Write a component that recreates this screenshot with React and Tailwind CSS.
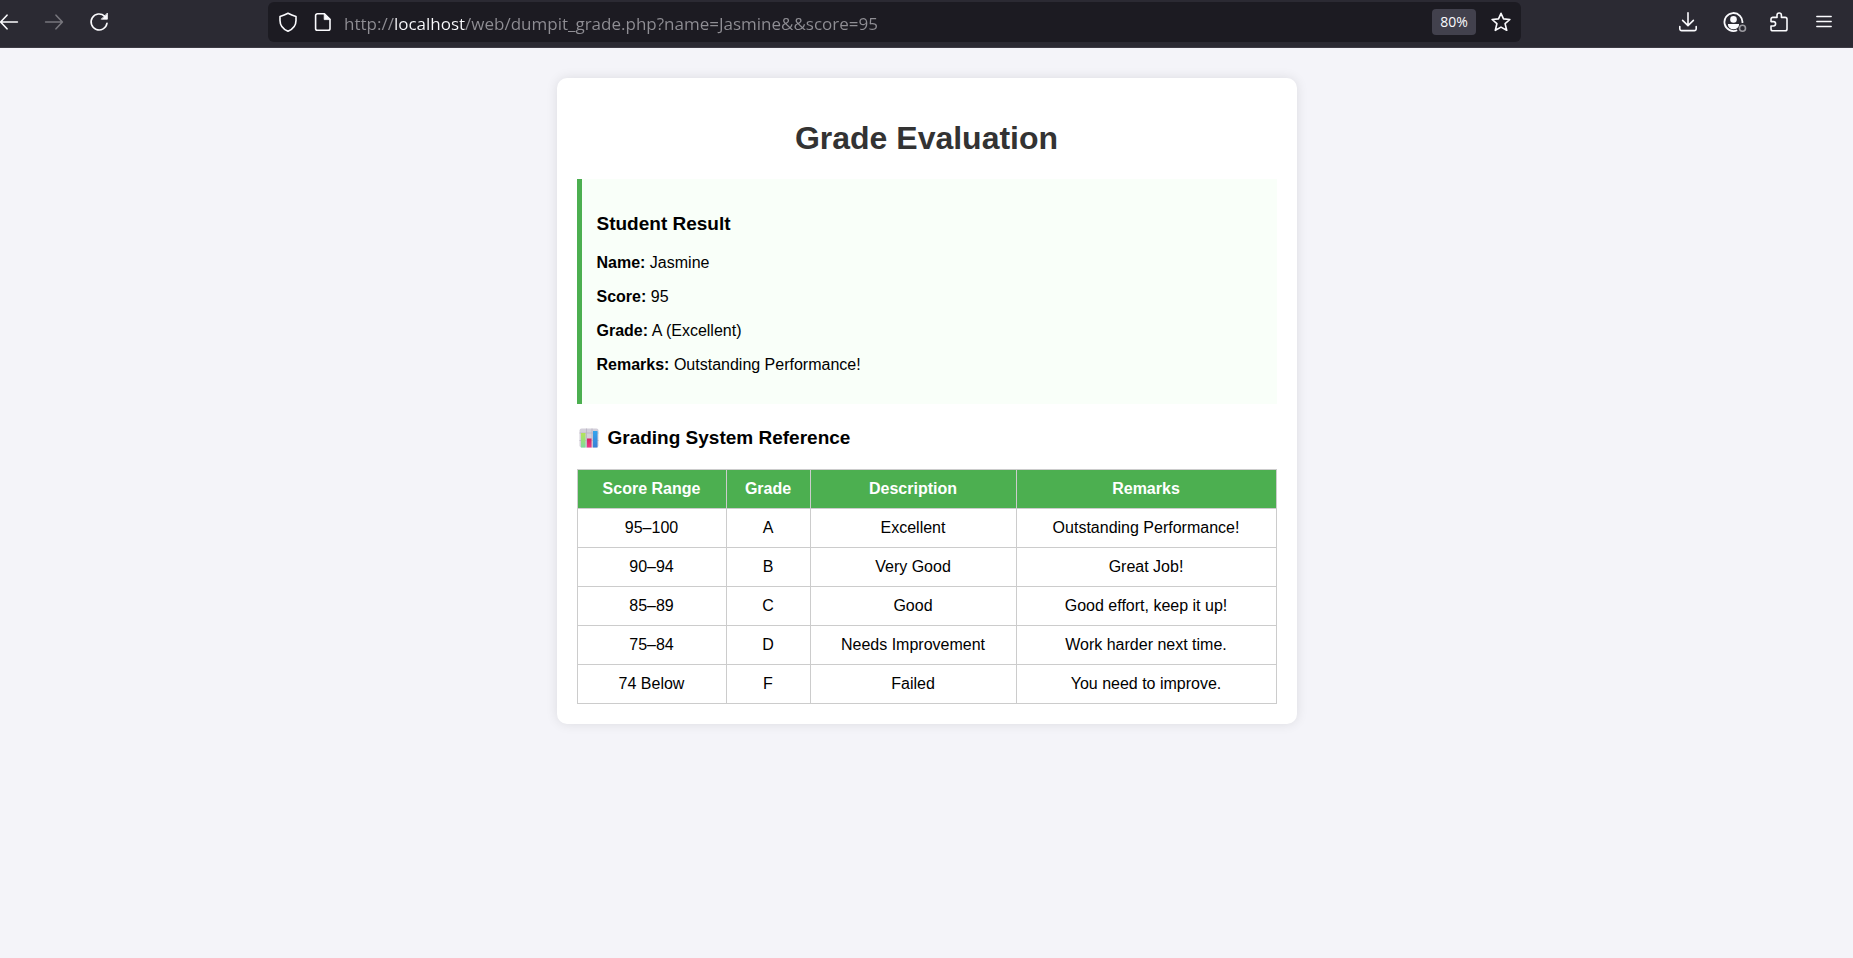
const grades = [
  ["95–100", "A", "Excellent", "Outstanding Performance!"],
  ["90–94", "B", "Very Good", "Great Job!"],
  ["85–89", "C", "Good", "Good effort, keep it up!"],
  ["75–84", "D", "Needs Improvement", "Work harder next time."],
  ["74 Below", "F", "Failed", "You need to improve."],
];

const result = [
  ["Name:", "Jasmine"],
  ["Score:", "95"],
  ["Grade:", "A (Excellent)"],
  ["Remarks:", "Outstanding Performance!"],
];

function Icon({ children, className = "size-5" }) {
  return (
    <svg
      viewBox="0 0 20 20"
      className={`${className} block shrink-0`}
      fill="none"
      stroke="currentColor"
      strokeWidth="1.6"
      strokeLinecap="round"
      strokeLinejoin="round"
      aria-hidden="true"
    >
      {children}
    </svg>
  );
}

function BarButton({ label, className = "", disabled = false, children }) {
  return (
    <button type="button" aria-label={label} disabled={disabled} className={`shrink-0 ${className}`}>
      {children}
    </button>
  );
}

function Toolbar() {
  return (
    <header className="flex items-center border-b border-[#3d3b45] bg-[#2b2a33] pt-0.5 pb-[5px] text-[#fbfbfe]">
      <nav aria-label="Navigation" className="flex w-[268px] shrink-0 items-center gap-[25px]">
        <BarButton label="Back" className="-ml-px">
          <Icon>
            <path d="M8 3.2 1.6 10 8 16.8M1.8 10H18.4" />
          </Icon>
        </BarButton>
        <BarButton label="Forward" disabled className="text-[#77767d]">
          <Icon>
            <path d="M12 3.2 18.4 10 12 16.8M18.2 10H1.6" />
          </Icon>
        </BarButton>
        <BarButton label="Reload">
          <Icon>
            <path d="M18 11.2A8 8 0 1 1 15.6 4.2" />
            <path d="M18.4 1.4V7.2H12.6Z" fill="currentColor" strokeWidth="0.8" />
          </Icon>
        </BarButton>
      </nav>

      <div className="flex h-10 min-w-0 flex-1 items-center rounded-md bg-[#1c1b22] pr-2.5 pl-2.5">
        <BarButton label="Site protection">
          <Icon>
            <path d="M10 1.2C12.6 2.6 15.2 3.6 18 4.4V8.4C18 13 15 17 10 19.2C5 17 2 13 2 8.4V4.4C4.8 3.6 7.4 2.6 10 1.2Z" />
          </Icon>
        </BarButton>
        <BarButton label="Site information" className="ml-[15px]">
          <Icon>
            <path d="M4.4 1.8H11.4L17 7.4V16.4A1.8 1.8 0 0 1 15.2 18.2H4.4A1.8 1.8 0 0 1 2.6 16.4V3.6A1.8 1.8 0 0 1 4.4 1.8Z" />
            <path d="M11.2 2V7.6H16.8Z" fill="currentColor" strokeWidth="0.8" />
          </Icon>
        </BarButton>
        <input
          type="text"
          aria-label="Address"
          defaultValue="http://localhost/web/dumpit_grade.php?name=Jasmine&&score=95"
          className="ml-[11px] h-10 min-w-0 flex-1 bg-linear-[90deg,#8f8e94_50px,#fbfbfe_50px,#fbfbfe_121px,#8f8e94_121px] bg-clip-text pt-0.5 font-['Open_Sans','Noto_Sans',sans-serif] text-[17px] text-transparent outline-none"
        />
        <button
          type="button"
          className="h-[26px] w-11 shrink-0 rounded bg-[#42414d] font-['Open_Sans','Noto_Sans',sans-serif] text-sm"
        >
          80%
        </button>
        <BarButton label="Bookmark" className="ml-[15px]">
          <Icon>
            <path d="M10 1.3 12.5 6.9 18.9 7.5 14.1 11.7 15.7 18.3 10 15.1 4.3 18.3 5.9 11.7 1.1 7.5 7.5 6.9Z" />
          </Icon>
        </BarButton>
      </div>

      <div className="flex w-[332px] shrink-0 items-center justify-end pr-[19px]">
        <BarButton label="Downloads">
          <Icon>
            <path d="M10 .8V13.2M4.6 8.4 10 13.6 15.4 8.4M1.8 14.6V16.8A1.8 1.8 0 0 0 3.6 18.6H16.4A1.8 1.8 0 0 0 18.2 16.8V14.6" />
          </Icon>
        </BarButton>
        <BarButton label="Account" className="ml-[25px]">
          <svg viewBox="0 0 24 20" className="block h-5 w-6" fill="none" stroke="currentColor" aria-hidden="true">
            <path d="M14.2 18.2A9 9 0 1 1 19.4 11" strokeWidth="1.8" />
            <circle cx="10.5" cy="7.4" r="3.3" fill="currentColor" stroke="none" />
            <path d="M5 12H16V13A5.5 4.2 0 0 1 5 13Z" fill="currentColor" stroke="none" />
            <circle cx="19.5" cy="16.2" r="3" stroke="#9c9ba1" strokeWidth="1.6" />
          </svg>
        </BarButton>
        <BarButton label="Extensions" className="ml-[22px]">
          <Icon>
            <path d="M3.8 18.8H16.2A1.8 1.8 0 0 0 18 17V7.2A1.8 1.8 0 0 0 16.2 5.4H12.4V3.2A2.2 2.2 0 0 0 8 3.2V5.4H3.8A1.8 1.8 0 0 0 2 7.2V9.6H4.4A2.2 2.2 0 0 1 4.4 14H2V17A1.8 1.8 0 0 0 3.8 18.8" />
          </Icon>
        </BarButton>
        <BarButton label="Menu" className="ml-[25px]">
          <Icon>
            <path d="M2.8 4.5H17.2M2.8 9.5H17.2M2.8 14.5H17.2" strokeWidth="1.4" />
          </Icon>
        </BarButton>
      </div>
    </header>
  );
}

function ChartIcon() {
  return (
    <svg viewBox="0 0 20 20" className="block size-5 shrink-0" aria-hidden="true">
      <defs>
        <linearGradient id="chart-green" x1="0" y1="0" x2="0" y2="1">
          <stop offset="0" stopColor="#b5e35a" />
          <stop offset="1" stopColor="#7fdc9b" />
        </linearGradient>
        <linearGradient id="chart-pink" x1="0" y1="0" x2="0" y2="1">
          <stop offset="0" stopColor="#d8235e" />
          <stop offset="1" stopColor="#ee3a86" />
        </linearGradient>
        <linearGradient id="chart-blue" x1="0" y1="0" x2="0" y2="1">
          <stop offset="0" stopColor="#35a5ee" />
          <stop offset="1" stopColor="#3c7fd4" />
        </linearGradient>
      </defs>
      <rect x="0.5" y="0.5" width="19" height="19" rx="2" fill="#d3cfda" />
      <path d="M.5 5H19.5M.5 12.5H19.5M7.5 .5V19.5M13 .5V19.5" stroke="#b9b3c3" strokeWidth="0.8" />
      <rect x="2" y="5" width="4.5" height="14.5" fill="url(#chart-green)" />
      <rect x="8" y="10.5" width="4.5" height="9" fill="url(#chart-pink)" />
      <rect x="14" y="3" width="4.5" height="16.5" fill="url(#chart-blue)" />
    </svg>
  );
}

export default function App() {
  return (
    <div className="min-h-screen bg-[#f4f4f9] font-['Liberation_Sans',Arial,sans-serif] text-base leading-[18px] text-black">
      <Toolbar />
      <main className="mx-auto mt-[30px] max-w-[740px] rounded-[10px] bg-white p-5 shadow-[0_0_12px_rgba(0,0,0,0.1)]">
        <h1 className="mt-[21px] mb-[21px] text-center text-[32px] leading-[39px] font-bold text-[#333333]">
          Grade Evaluation
        </h1>

        <section className="border-l-[5px] border-[#4caf50] bg-[#f9fff9] px-[15px] pt-[34px] pb-[30px]">
          <h2 className="mb-[19px] text-[19px] leading-[22px] font-bold">Student Result</h2>
          <div className="flex flex-col gap-4">
            {result.map(([label, value]) => (
              <p key={label}>
                <strong>{label}</strong> {value}
              </p>
            ))}
          </div>
        </section>

        <h2 className="mt-[23px] mb-5 flex items-center gap-[9px] pl-0.5 text-[19px] leading-[22px] font-bold">
          <ChartIcon />
          Grading System Reference
        </h2>

        <table className="w-full table-fixed border-collapse text-center">
          <colgroup>
            <col className="w-[149px]" />
            <col className="w-[84px]" />
            <col className="w-[206px]" />
            <col />
          </colgroup>
          <thead>
            <tr className="bg-[#4caf50] text-white">
              {["Score Range", "Grade", "Description", "Remarks"].map((title) => (
                <th key={title} scope="col" className="border border-[#cccccc] py-2.5 font-bold">
                  {title}
                </th>
              ))}
            </tr>
          </thead>
          <tbody>
            {grades.map((row) => (
              <tr key={row[1]}>
                {row.map((cell) => (
                  <td key={cell} className="border border-[#cccccc] py-2.5">
                    {cell}
                  </td>
                ))}
              </tr>
            ))}
          </tbody>
        </table>
      </main>
    </div>
  );
}
